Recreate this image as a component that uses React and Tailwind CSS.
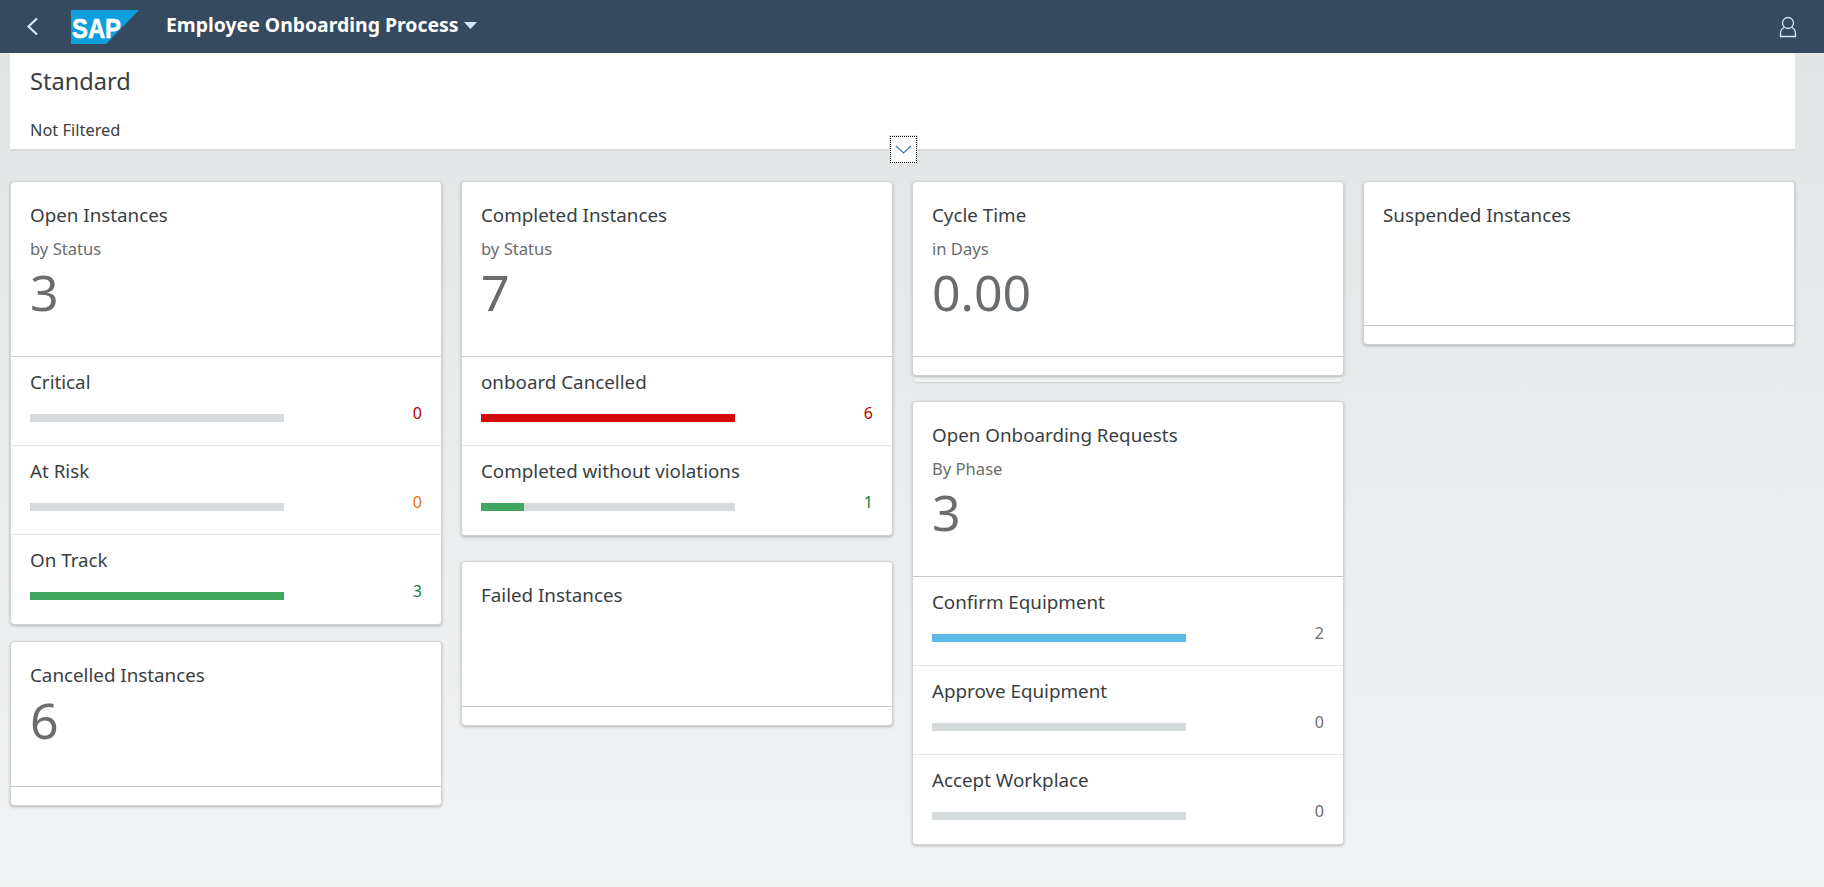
const font = { fontFamily: '"Noto Sans", "Open Sans", sans-serif' }

function Row({ label, value, color, barColor, percent, last }) {
  return (
    <div className={`h-[89px] px-[19px] pt-[12px] flex flex-col ${last ? '' : 'border-b border-[#e5e5e5]'}`}>
      <div className="text-[18.8px] leading-[26px] text-[#3a3e42]">{label}</div>
      <div className="flex items-center justify-between mt-[7px]">
        <div className="w-[254px] h-[8px] mt-[10px] bg-[#d5dadd]">
          <div className="h-full" style={{ width: `${percent}%`, backgroundColor: barColor }}></div>
        </div>
        <span className={`text-[16px] leading-[22px] ${color}`}>{value}</span>
      </div>
    </div>
  )
}

function Card({ title, sub, number, headerHeight, rows, stacked }) {
  return (
    <div className="relative">
      <div className="bg-white rounded-[4px] border border-[#d0d3d5] shadow-[0_1px_3px_rgba(0,0,0,0.25)] relative z-10">
        <div className="px-[19px] pt-[20px] border-b border-[#c8cbcd]" style={{ height: headerHeight }}>
          <div className="text-[18.8px] leading-[26px] text-[#3a3e42]">{title}</div>
          {sub && <div className="text-[16.6px] leading-[22px] mt-[10px] text-[#6a6d70]">{sub}</div>}
          {number && <div className="text-[50px] leading-[58px] mt-[3px] text-[#6a6d70]">{number}</div>}
        </div>
        {rows ? rows.map((r, i) => <Row key={r.label} {...r} last={i === rows.length - 1} />) : <div className="h-[18px]"></div>}
      </div>
      {stacked && <div className="h-[6px] mx-px rounded-b-[4px] bg-[#f2f3f4] shadow-[0_1px_2px_rgba(0,0,0,0.12)]"></div>}
    </div>
  )
}

export default function App() {
  const green = '#3fa75f'
  return (
    <div style={font} className="w-[1824px] h-[887px] overflow-hidden bg-gradient-to-b from-[#e1e4e5] to-[#f1f3f4]">
      <header className="h-[53px] bg-[#354a5f] flex items-center text-white">
        <svg width="13" height="19" viewBox="0 0 13 19" fill="none" className="ml-[26px]">
          <polyline points="11,1.5 2.5,9.5 11,17.5" stroke="#d1e8ff" strokeWidth="2.2" />
        </svg>
        <svg width="68" height="34" viewBox="0 0 68 34" className="ml-[32px]">
          <polygon points="0,0 68,0 35,34 0,34" fill="#0f9fdc" />
          <text x="1" y="28" fontFamily="Liberation Sans" fontWeight="700" fontSize="28" fill="#fff" stroke="#fff" strokeWidth="0.6" textLength="49" lengthAdjust="spacingAndGlyphs">SAP</text>
        </svg>
        <span className="ml-[27px] mb-[4px] text-[19.4px] font-bold whitespace-nowrap">Employee Onboarding Process</span>
        <svg width="13" height="7" viewBox="0 0 13 7" className="ml-[6px] mb-[3px]"><polygon points="0,0 13,0 6.5,7" fill="#d1e8ff" /></svg>
        <svg width="18" height="22" viewBox="0 0 18 22" fill="none" className="ml-auto mr-[27px]" stroke="#d1e8ff" strokeWidth="1.3">
          <circle cx="9" cy="7" r="5.5" />
          <path d="M5 11.5 C2.5 13 1.5 15 1.5 17.5 V20.5 H16.5 V17.5 C16.5 15 15.5 13 13 11.5" />
        </svg>
      </header>

      <div className="relative mx-[10px] w-[1785px] h-[98px] bg-white border-b-2 border-[#d9d9d9] px-[20px] pt-[13px] text-[#3a3e42]">
        <div className="text-[23.6px] leading-[30px]">Standard</div>
        <div className="text-[16.4px] leading-[22px] mt-[23px]">Not Filtered</div>
        <button className="absolute left-[880px] top-[83px] w-[27px] h-[27px] bg-white flex items-center justify-center border border-dotted border-black outline outline-[#e5e5e5]">
          <svg width="17" height="9" viewBox="0 0 17 9" fill="none">
            <polyline points="1,1 8.5,8 16,1" stroke="#3a75b0" strokeWidth="1.1" />
          </svg>
        </button>
      </div>

      <div className="flex gap-[19px] ml-[10px] mt-[30px]">
        <div className="w-[432px] flex flex-col gap-[16px]">
          <Card title="Open Instances" sub="by Status" number="3" headerHeight={175} rows={[
            { label: 'Critical', value: 0, color: 'text-[#bb0000]', barColor: green, percent: 0 },
            { label: 'At Risk', value: 0, color: 'text-[#e9730c]', barColor: green, percent: 0 },
            { label: 'On Track', value: 3, color: 'text-[#107e3e]', barColor: green, percent: 100 },
          ]} />
          <Card title="Cancelled Instances" number="6" headerHeight={145} />
        </div>
        <div className="w-[432px] flex flex-col gap-[25px]">
          <Card title="Completed Instances" sub="by Status" number="7" headerHeight={175} rows={[
            { label: 'onboard Cancelled', value: 6, color: 'text-[#bb0000]', barColor: '#d40b0b', percent: 100 },
            { label: 'Completed without violations', value: 1, color: 'text-[#107e3e]', barColor: green, percent: 17 },
          ]} />
          <Card title="Failed Instances" headerHeight={145} />
        </div>
        <div className="w-[432px] flex flex-col gap-[19px]">
          <Card title="Cycle Time" sub="in Days" number="0.00" headerHeight={175} stacked />
          <Card title="Open Onboarding Requests" sub="By Phase" number="3" headerHeight={175} rows={[
            { label: 'Confirm Equipment', value: 2, color: 'text-[#6a6d70]', barColor: '#5cbae6', percent: 100 },
            { label: 'Approve Equipment', value: 0, color: 'text-[#6a6d70]', barColor: green, percent: 0 },
            { label: 'Accept Workplace', value: 0, color: 'text-[#6a6d70]', barColor: green, percent: 0 },
          ]} />
        </div>
        <div className="w-[432px]">
          <Card title="Suspended Instances" headerHeight={144} />
        </div>
      </div>
    </div>
  )
}
